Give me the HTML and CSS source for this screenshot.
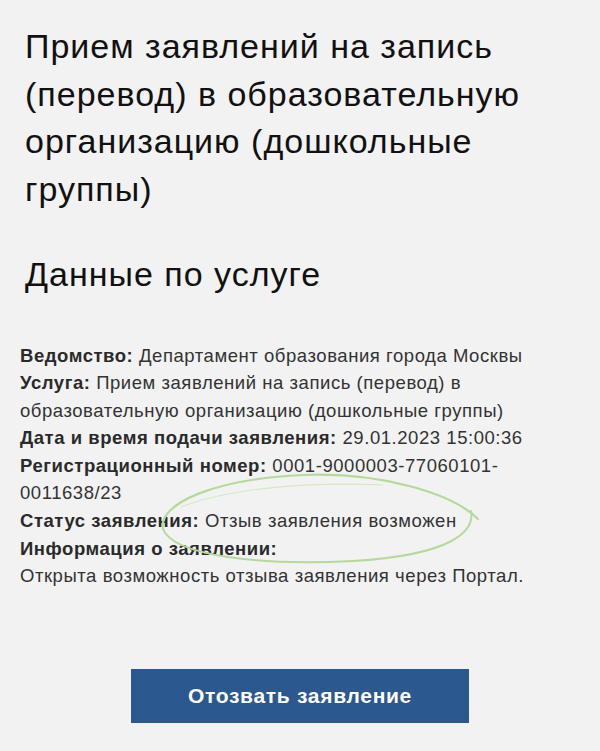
FILE: index.html
```html
<!DOCTYPE html>
<html lang="ru">
<head>
<meta charset="utf-8">
<link rel="stylesheet" href="styles.css">
</head>
<body>
<main class="page">
  <h1 class="title">Прием заявлений на запись (перевод) в образовательную организацию (дошкольные группы)</h1>
  <h2 class="subtitle">Данные по услуге</h2>
  <div class="info">
    <p><b>Ведомство:</b> Департамент образования города Москвы</p>
    <p><b>Услуга:</b> Прием заявлений на запись (перевод) в образовательную организацию (дошкольные группы)</p>
    <p><b>Дата и время подачи заявления:</b> 29.01.2023 15:00:36</p>
    <p><b>Регистрационный номер:</b> 0001-9000003-77060101-0011638/23</p>
    <p><b>Статус заявления:</b> Отзыв заявления возможен</p>
    <p><b>Информация о заявлении:</b></p>
    <p>Открыта возможность отзыва заявления через Портал.</p>
    <svg class="circle" width="335" height="100" viewBox="0 0 335 100">
      <path d="M10 60 C 5 35, 60 10, 150 6 C 230 3, 300 25, 325 50" fill="none" stroke="#b6d99b" stroke-width="2.2" stroke-linecap="round"/>
      <path d="M318 42 C 322 62, 300 86, 200 92 C 110 97, 20 87, 10 60" fill="none" stroke="#b6d99b" stroke-width="2" stroke-linecap="round"/>
      <path d="M28 38 C 80 18, 160 13, 230 16" fill="none" stroke="#d5e9c3" stroke-width="1.1" stroke-linecap="round"/>
    </svg>
  </div>
  <div class="actions">
    <button class="btn">Отозвать заявление</button>
  </div>
</main>
</body>
</html>
```
FILE: styles.css
```css
html, body {
  margin: 0;
  padding: 0;
  background: #f2f2f2;
}
body {
  font-family: "Liberation Sans", Arial, sans-serif;
  color: #111;
}
.page {
  padding: 23px 18px 0 25px;
}
.title {
  margin: 0;
  font-weight: 400;
  font-size: 34px;
  letter-spacing: 1px;
  line-height: 47.5px;
  color: #111;
}
.subtitle {
  margin: 38px 0 0 0;
  font-weight: 400;
  font-size: 34px;
  letter-spacing: 1px;
  line-height: 47.5px;
  color: #111;
}
.info {
  position: relative;
  margin: 43px 0 0 -5px;
  font-size: 18.5px;
  letter-spacing: 0.55px;
  line-height: 27.6px;
  color: #333;
}
.info p {
  margin: 0;
}
.info b {
  color: #2a2a2a;
}
.circle {
  position: absolute;
  left: 133px;
  top: 127px;
}
.actions {
  display: flex;
  justify-content: center;
  margin-top: 79px;
}
.btn {
  width: 338px;
  height: 54px;
  margin-left: -7px;
  border: none;
  background: #2c5890;
  color: #fff;
  font-family: "Liberation Sans", Arial, sans-serif;
  font-weight: 700;
  font-size: 21px;
  letter-spacing: 0.7px;
}
```
